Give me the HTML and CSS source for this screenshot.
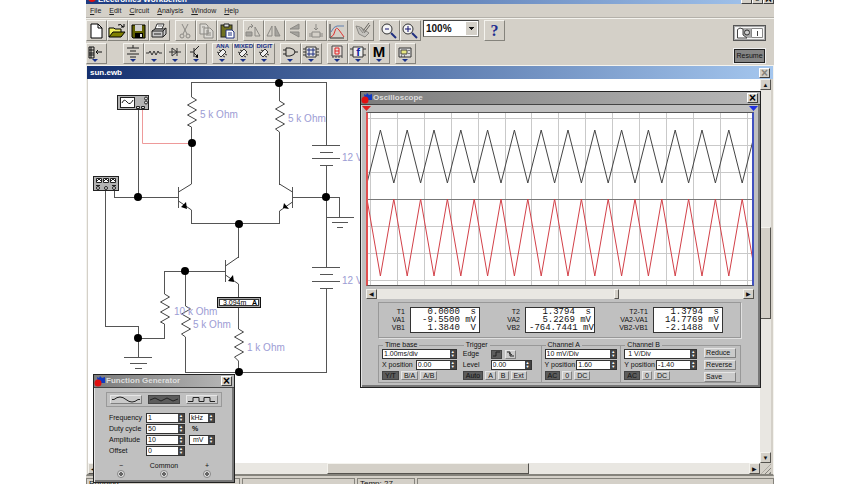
FILE: index.html
```html
<!DOCTYPE html>
<html lang="en">
<head>
  <meta charset="UTF-8" />
  <meta name="viewport" content="width=device-width, initial-scale=1.0"/>
  <title>Electronics Workbench</title>
  <link rel="stylesheet" href="styles.css">
</head>
<body>
  <div class="app">
    <header class="app-title">
      <svg class="bug" width="12" height="12" viewBox="0 0 12 12"><circle cx="6" cy="6" r="4" fill="#e01010"/></svg>
      <span class="app-name">Electronics Workbench</span>
      <span class="app-controls">
        <button class="win-btn" aria-label="Minimize">_</button>
        <button class="win-btn" aria-label="Restore">▫</button>
        <button class="win-btn" aria-label="Close">×</button>
      </span>
    </header>

    <nav class="menu">
      <a href="#"><u>F</u>ile</a>
      <a href="#"><u>E</u>dit</a>
      <a href="#"><u>C</u>ircuit</a>
      <a href="#"><u>A</u>nalysis</a>
      <a href="#"><u>W</u>indow</a>
      <a href="#"><u>H</u>elp</a>
    </nav>

    <div class="tools">
      <div class="tool-rows">
        <div class="toolbar">
          <div class="tool-group">
            <button class="tool" aria-label="New"><svg viewBox="0 0 18 18"><path d="M4 2h7l4 4v10H4z" fill="#fff" stroke="#000"/><path d="M11 2v4h4" fill="none" stroke="#000"/></svg></button>
            <button class="tool" aria-label="Open"><svg viewBox="0 0 18 18"><path d="M1 15V6h5l1 1h6v3" fill="#f0f060" stroke="#000"/><path d="M1 15l4-5h12l-4 5z" fill="#808000" stroke="#000"/><path d="M10 3q3-2 5 2M16 2v3h-3" fill="none" stroke="#000"/></svg></button>
            <button class="tool" aria-label="Save"><svg viewBox="0 0 18 18"><path d="M3 3h13v13H4l-1-1z" fill="#606000" stroke="#000"/><path d="M6 3h7v6H6z" fill="#d0d0d0"/><path d="M6 11h8v5H6z" fill="#000"/><path d="M11 12h2v3h-2z" fill="#ddd"/></svg></button>
            <button class="tool" aria-label="Print"><svg viewBox="0 0 18 18"><path d="M5 7l2-5h7l-2 5z" fill="#fff" stroke="#333"/><path d="M2 9l3-2h9l2-1v6l-3 3H2z" fill="#c8c8c8" stroke="#222"/><path d="M2 9h11v6M13 9l3-3M4 12h7" fill="none" stroke="#222"/><path d="M8 4h4" stroke="#777"/></svg></button>
          </div>
          <div class="tool-group">
            <button class="tool" aria-label="Cut"><svg viewBox="0 0 18 18"><path d="M6 2l5 10M12 2L7 12" fill="none" stroke="#8b8984"/><circle cx="6" cy="14" r="2" fill="none" stroke="#8b8984"/><circle cx="12" cy="14" r="2" fill="none" stroke="#8b8984"/></svg></button>
            <button class="tool" aria-label="Copy"><svg viewBox="0 0 18 18"><path d="M3 2h6l2 2v8H3zM7 6h6l3 3v7H7z" fill="#dcdad5" stroke="#8b8984"/><path d="M9 9h3M9 11h5M9 13h5M5 5h3" stroke="#8b8984"/></svg></button>
            <button class="tool" aria-label="Paste"><svg viewBox="0 0 18 18"><rect x="3" y="3" width="11" height="12" fill="#707020" stroke="#222"/><path d="M6 2h5v3H6z" fill="#ddd" stroke="#222"/><path d="M8 8h6l2 2v6H8z" fill="#fff" stroke="#203080"/><path d="M10 11h4M10 13h4" stroke="#203080"/></svg></button>
          </div>
          <div class="tool-group">
            <button class="tool" aria-label="Rotate"><svg viewBox="0 0 18 18"><path d="M2 14v-4h6v4z" fill="#a5a39e" stroke="#8b8984"/><path d="M11 14V5l5 9zM4 8q0-4 4-4M7 2l2 2-2 2" fill="none" stroke="#8b8984"/></svg></button>
            <button class="tool" aria-label="Flip horizontal"><svg viewBox="0 0 18 18"><path d="M2 14h5V4z" fill="none" stroke="#8b8984"/><path d="M10 14V4l5 10z" fill="#a5a39e" stroke="#8b8984"/></svg></button>
            <button class="tool" aria-label="Flip vertical"><svg viewBox="0 0 18 18"><path d="M13 2v5H4z" fill="#a5a39e" stroke="#8b8984"/><path d="M4 10h9v5z" fill="#a5a39e" stroke="#8b8984"/></svg></button>
            <button class="tool" aria-label="Create subcircuit"><svg viewBox="0 0 18 18"><path d="M9 2v6M7 6l2 2 2-2M5 10h8v5H5zM2 12h3M13 12h3M2 14h3M13 14h3" fill="none" stroke="#8b8984"/></svg></button>
            <button class="tool" aria-label="Display graphs"><svg viewBox="0 0 18 18"><path d="M2 2v14h14" fill="none" stroke="#333"/><path d="M3 10q3-6 6-6h7" fill="none" stroke="#6080b0"/><path d="M3 15q3-1 4-6t4-1 5 7" fill="none" stroke="#e03030"/></svg></button>
          </div>
          <div class="tool-group">
            <button class="tool" aria-label="Component properties"><svg viewBox="0 0 18 18"><path d="M2 4l3 8 6 3 4-4-9-6z" fill="#c5c3be" stroke="#8b8984"/><path d="M15 1l-6 8M16 3l-6 8" stroke="#66645f"/><path d="M5 6l4 5M7 5l4 6" stroke="#8b8984"/></svg></button>
          </div>
          <div class="tool-group">
            <button class="tool" aria-label="Zoom out"><svg viewBox="0 0 18 18"><circle cx="7" cy="7" r="5" fill="#f4f4f4" stroke="#333"/><path d="M5 7h4" stroke="#101070"/><path d="M11 11l5 5" stroke="#203080" stroke-width="2"/></svg></button>
            <button class="tool" aria-label="Zoom in"><svg viewBox="0 0 18 18"><circle cx="7" cy="7" r="5" fill="#f4f4f4" stroke="#333"/><path d="M4 7h6M7 4v6" stroke="#101070"/><path d="M11 11l5 5" stroke="#203080" stroke-width="2"/></svg></button>
          </div>
          <select class="zoom" aria-label="Zoom"><option>100%</option></select>
          <button class="tool help" aria-label="Help">?</button>
        </div>

        <div class="toolbar">
          <div class="tool-group favorites">
            <button class="tool" aria-label="Favorites"><svg viewBox="0 0 18 18"><path d="M2 2h5v11H2zM2 5h5M2 8h5M2 10h5M4 2v11M9 7h6M11 5L9 7l2 2" fill="none" stroke="#111"/><path class="drop" d="M5 14h6l-3 3z"/></svg></button>
          </div>
          <div class="tool-group">
            <button class="tool" aria-label="Sources"><svg viewBox="0 0 18 18"><path d="M9 0v3M3 3h12M6 6h6M3 9h12M6 12h6" stroke="#222"/><path class="drop" d="M6 14h6l-3 3z"/></svg></button>
            <button class="tool" aria-label="Basic"><svg viewBox="0 0 18 18"><path d="M1 8h3l1-2 2 4 2-4 2 4 2-4 1 2h3" fill="none" stroke="#333"/><path class="drop" d="M6 14h6l-3 3z"/></svg></button>
            <button class="tool" aria-label="Diodes"><svg viewBox="0 0 18 18"><path d="M3 7h12M6 3v8l5-4zM11 3v8" fill="none" stroke="#333"/><path class="drop" d="M6 14h6l-3 3z"/></svg></button>
            <button class="tool" aria-label="Transistors"><svg viewBox="0 0 18 18"><path d="M3 7h4M7 3v9M7 6l5-5M7 8l4 4" fill="none" stroke="#222"/><path d="M11 13V9l-3 3z"/><path class="drop" d="M6 14h6l-3 3z"/></svg></button>
          </div>
          <div class="tool-group">
            <button class="tool chip" aria-label="Analog ICs"><span>ANA</span><svg viewBox="0 0 18 18"><path d="M5 9l5-5 3 3-5 5zM4 7l2 1M6 5l2 1M12 9l2 1M10 11l2 1" fill="#eee" stroke="#333"/><path class="drop" d="M6 14h6l-3 3z"/></svg></button>
            <button class="tool chip" aria-label="Mixed ICs"><span>MIXED</span><svg viewBox="0 0 18 18"><path d="M5 9l5-5 3 3-5 5zM4 7l2 1M6 5l2 1M12 9l2 1M10 11l2 1" fill="#eee" stroke="#333"/><path class="drop" d="M6 14h6l-3 3z"/></svg></button>
            <button class="tool chip" aria-label="Digital ICs"><span>DIGIT</span><svg viewBox="0 0 18 18"><path d="M5 9l5-5 3 3-5 5zM4 7l2 1M6 5l2 1M12 9l2 1M10 11l2 1" fill="#eee" stroke="#333"/><path class="drop" d="M6 14h6l-3 3z"/></svg></button>
          </div>
          <div class="tool-group">
            <button class="tool" aria-label="Logic gates"><svg viewBox="0 0 18 18"><path d="M5 3h4q5 1 5 4t-5 4H5zM2 5h3M2 9h3M14 7h3" fill="none" stroke="#222"/><path class="drop" d="M6 14h6l-3 3z"/></svg></button>
            <button class="tool" aria-label="Digital"><svg viewBox="0 0 18 18"><path d="M4 2h10v10H4zM1 4h3M1 7h3M1 10h3M14 4h3M14 7h3M14 10h3" fill="#e8e8e8" stroke="#333"/><path d="M6 4h2v2H6zM10 4h2v2h-2zM6 8h2v2H6zM10 8h2v2h-2z" fill="none" stroke="#203080"/><path class="drop" d="M6 14h6l-3 3z"/></svg></button>
          </div>
          <div class="tool-group">
            <button class="tool" aria-label="Indicators"><svg viewBox="0 0 18 18"><path d="M4 1h10v10H4zM5 11v2M8 11v2M11 11v2M14 11v2" fill="#e8dcd8" stroke="#444"/><path d="M7 3h4v6H7zM7 6h4" fill="none" stroke="#e02020"/><path class="drop" d="M6 14h6l-3 3z"/></svg></button>
            <button class="tool" aria-label="Controls"><svg viewBox="0 0 18 18"><path d="M4 2h10v10H4zM1 4h3M1 10h3M14 4h3M14 10h3" fill="#eee" stroke="#333"/><text x="9" y="11" class="small-f">f</text><path class="drop" d="M6 14h6l-3 3z"/></svg></button>
            <button class="tool" aria-label="Miscellaneous"><svg viewBox="0 0 18 18"><text x="9" y="12" class="big-m">M</text><path class="drop" d="M6 14h6l-3 3z"/></svg></button>
          </div>
          <div class="tool-group">
            <button class="tool" aria-label="Instruments"><svg viewBox="0 0 18 18"><path d="M3 3h12v9H3z" fill="#ddd" stroke="#333"/><path d="M5 5h6v4H5z" fill="#e8e880" stroke="#444"/><path d="M13 5v1M13 8v1M5 11h1M8 11h1" stroke="#222"/><path class="drop" d="M6 14h6l-3 3z"/></svg></button>
          </div>
        </div>
      </div>

      <div class="power">
        <button class="power-switch" aria-label="Power switch"><svg width="29" height="12" viewBox="0 0 29 12"><path d="M0 0h29v12H0z" fill="#f4f4f4"/><path d="M6 1h10v10H6z" fill="#aaa"/><path d="M2.500 11V2.500L5 1l3 1v6l4 3z" fill="#fff" stroke="#444"/><path d="M16.500 1.500h11v9h-11z" fill="#fff" stroke="#888"/><circle cx="12" cy="5.500" r="2.500" fill="#ccc" stroke="#333"/><path d="M22.500 4v5" stroke="#444"/></svg></button>
        <button class="resume">Resume</button>
      </div>
    </div>

    <main class="child">
      <div class="child-title">
        <span>sun.ewb</span>
        <button class="win-btn dim" aria-label="Close circuit">×</button>
      </div>

      <div class="workspace">
        <div class="canvas">
          <svg class="circuit" width="672" height="383" viewBox="88 79 672 383">
            <!-- wires -->
            <g class="wire">
              <path d="M191.500 97V82.500H326.500V145.500M191.500 127V183.500M191.500 210V223.500H279.500V211M279.500 82.500V101M279.500 132V184.500"/>
              <path d="M114.500 191V197.500H178.500M138.500 110V197M105.500 191V326.500H138.500V357.500M138 338.500H164.500V324M164.500 294V271.500H225.500M185.500 271V306M185.500 337V372.500H326.500V288.500"/>
              <path d="M292.500 197.500H339.500V217.500M326.500 165.500V267.500M238.500 224V257.500M238.500 284V329M238.500 361V372"/>
              <path d="M312 145.500h28M320 152.500h13M312 158.500h28M320 165.500h13M312 267.500h28M320 274.500h13M312 281.500h28M320 288.500h13"/>
              <path d="M326 217.500h28M332 222.500h16M337 227.500h6M124 357.500h28M130 363.500h17M135 368.500h7"/>
              <path d="M178.500 187v21M292.500 187v21M225.500 260v22"/>
            </g>
            <path d="M142.500 110V143.500H191" fill="none" stroke="#ee9a9a"/>
            <!-- resistors and transistor legs -->
            <g class="part">
              <path d="M191.500 97l5 3-9 5 9 5-9 5 9 5-9 5 4 2M279.500 101l5 3-9 5 9 5-9 5 9 5-9 5 4 3"/>
              <path d="M164.500 294l5 3-9 5 9 5-9 5 9 5-9 5 4 2M185.500 306l5 3-9 5 9 5-9 5 9 5-9 5 4 3M238.500 329l5 3-9 5 9 5-9 5 9 5-9 5 4 4"/>
              <path d="M178.500 192l13-8M178.500 201l13 9M292.500 192l-13-8M292.500 202l-13 9M225.500 266l13-9M225.500 275l13 9"/>
            </g>
            <path d="M187 209l-6-2 5-5zM284 203l5 6-6-1zM234 282l-6-1 5-6z"/>
            <g>
              <circle cx="279" cy="83" r="4"/><circle cx="192" cy="143" r="4"/><circle cx="138" cy="197" r="4"/>
              <circle cx="326" cy="197" r="4"/><circle cx="239" cy="224" r="4"/><circle cx="185" cy="271" r="4"/>
              <circle cx="138" cy="338" r="4"/><circle cx="239" cy="372" r="4"/>
            </g>
            <g class="label">
              <text x="200" y="118">5 k Ohm</text>
              <text x="288" y="122">5 k Ohm</text>
              <text x="342" y="161">12 V</text>
              <text x="342" y="284">12 V</text>
              <text x="174" y="315">10 k Ohm</text>
              <text x="193" y="328">5 k Ohm</text>
              <text x="247" y="351">1 k Ohm</text>
            </g>
            <!-- oscilloscope and generator symbols -->
            <g stroke="#222">
              <rect x="117.500" y="95.500" width="31" height="14" fill="#b4b4b4"/>
              <rect x="120.500" y="97.500" width="14" height="10" fill="#fff"/>
              <path d="M122 103q2-5 5-1t6-2" fill="none"/>
              <circle cx="146" cy="98.500" r="1.500" fill="#ddd"/><circle cx="146" cy="102.500" r="1.500" fill="#ddd"/>
              <path d="M136.500 106.500h3v2h-3zM141.500 106.500h3v2h-3z" fill="#ddd"/>
              <rect x="93.500" y="176.500" width="25" height="14" fill="#b4b4b4"/>
              <path d="M96.500 178.500h5v4h-5zM103.500 178.500h5v4h-5zM110.500 178.500h5v4h-5z" fill="#fff"/>
              <path d="M97 181l2-2 2 2M104 181l2-2 2 2M111 181l2-2 2 2" fill="none"/>
              <path d="M96 185.500h4M112 185.500h4" fill="none"/>
              <circle cx="98" cy="188" r="1.500" fill="#ddd"/><circle cx="106" cy="188" r="1.500" fill="#ddd"/><circle cx="114" cy="188" r="1.500" fill="#ddd"/>
            </g>
            <!-- ammeter -->
            <rect x="217.500" y="297.500" width="43" height="10" fill="#aaa" stroke="#111"/>
            <rect x="219.500" y="299.500" width="39" height="6" fill="#fff" stroke="#333"/>
            <text x="223" y="305" class="meter">3.094m</text>
            <text x="252" y="305" class="meter unit">A</text>
          </svg>
        </div>

        <div class="scroll vertical">
          <button class="arrow" aria-label="Scroll up">▲</button>
          <span class="thumb"></span>
          <button class="arrow" aria-label="Scroll down">▼</button>
        </div>
        <div class="scroll horizontal">
          <button class="arrow" aria-label="Scroll left">◀</button>
          <span class="thumb"></span>
          <button class="arrow" aria-label="Scroll right">▶</button>
        </div>
        <div class="grip"></div>

        <section class="dialog scope">
          <div class="dialog-title">
            <svg width="12" height="11" viewBox="0 0 12 11"><path d="M3 1l2 1 1-2 2 2 3-1v6H4z" fill="#1038c0"/><circle cx="4" cy="7" r="3.500" fill="#e01010"/></svg>
            <span>Oscilloscope</span>
            <button class="win-btn" aria-label="Close oscilloscope">×</button>
          </div>
          <div class="scope-body">
            <div class="cursors"><span class="cursor-one"></span><span class="cursor-two"></span></div>
            <div class="screen">
              <svg width="386" height="172" viewBox="0 0 386 172">
                <path class="grid" d="M2.500 0v172M29.500 0v172M56.500 0v172M83.500 0v172M110.500 0v172M137.500 0v172M163.500 0v172M190.500 0v172M217.500 0v172M244.500 0v172M271.500 0v172M298.500 0v172M325.500 0v172M352.500 0v172M379.500 0v172"/>
                <path class="grid" d="M0 5.500h386M0 32.500h386M0 59.500h386M0 113.500h386M0 140.500h386M0 167.500h386"/>
                <path class="axis" d="M0 86.500h386"/>
                <path class="trace-a" d="M-1 70l13.400-53 13.400 53 13.400-53 13.400 53 13.400-53 13.400 53 13.400-53 13.400 53 13.400-53 13.400 53 13.400-53 13.400 53 13.400-53 13.400 53 13.400-53 13.400 53 13.400-53 13.400 53 13.400-53 13.400 53 13.400-53 13.400 53 13.400-53 13.400 53 13.400-53 13.400 53 13.400-53 13.400 53 13.400-53"/>
                <path class="trace-b" d="M-1 86l13.400 77 13.400-77 13.400 77 13.400-77 13.400 77 13.400-77 13.400 77 13.400-77 13.400 77 13.400-77 13.400 77 13.400-77 13.400 77 13.400-77 13.400 77 13.400-77 13.400 77 13.400-77 13.400 77 13.400-77 13.400 77 13.400-77 13.400 77 13.400-77 13.400 77 13.400-77 13.400 77 13.400-77 13.400 77"/>
              </svg>
            </div>
            <div class="scroll scope-scroll">
              <button class="arrow" aria-label="Earlier">◀</button>
              <span class="thumb"></span>
              <button class="arrow" aria-label="Later">▶</button>
            </div>

            <div class="readouts">
              <div class="names">T1<br>VA1<br>VB1</div>
              <pre class="values">0.0000  s
-9.5500 mV
1.3840  V</pre>
              <div class="names">T2<br>VA2<br>VB2</div>
              <pre class="values">1.3794  s
5.2269 mV
-764.7441 mV</pre>
              <div class="names">T2-T1<br>VA2-VA1<br>VB2-VB1</div>
              <pre class="values">1.3794  s
14.7769 mV
-2.1488  V</pre>
            </div>

            <div class="settings">
              <fieldset>
                <legend>Time base</legend>
                <div class="spin"><input type="text" value="1.00ms/div" aria-label="Time base"><span class="steps"><button aria-label="Up">▲</button><button aria-label="Down">▼</button></span></div>
                <div class="line"><label for="xpos">X position</label><div class="spin short"><input id="xpos" type="text" value="0.00"><span class="steps"><button aria-label="Up">▲</button><button aria-label="Down">▼</button></span></div></div>
                <div class="modes"><button class="on">Y/T</button><button>B/A</button><button>A/B</button></div>
              </fieldset>
              <fieldset class="trigger">
                <legend>Trigger</legend>
                <div class="line edge"><span>Edge</span><button class="on" aria-label="Rising edge"><svg width="9" height="6" viewBox="0 0 9 6"><path d="M1 5h3V1h4" fill="none" stroke="#222"/></svg></button><button aria-label="Falling edge"><svg width="9" height="6" viewBox="0 0 9 6"><path d="M1 1h3v4h4M3 2l3 2" fill="none" stroke="#222"/></svg></button></div>
                <div class="line"><label for="level">Level</label><div class="spin short"><input id="level" type="text" value="0.00"><span class="steps"><button aria-label="Up">▲</button><button aria-label="Down">▼</button></span></div></div>
                <div class="modes"><button class="on">Auto</button><button>A</button><button>B</button><button>Ext</button></div>
              </fieldset>
              <fieldset>
                <legend>Channel A</legend>
                <div class="spin"><input type="text" value="10 mV/Div" aria-label="Channel A scale"><span class="steps"><button aria-label="Up">▲</button><button aria-label="Down">▼</button></span></div>
                <div class="line"><label for="ya">Y position</label><div class="spin short"><input id="ya" type="text" value="1.60"><span class="steps"><button aria-label="Up">▲</button><button aria-label="Down">▼</button></span></div></div>
                <div class="modes"><button class="on">AC</button><button>0</button><button>DC</button></div>
              </fieldset>
              <fieldset>
                <legend>Channel B</legend>
                <div class="spin"><input type="text" value=" 1 V/Div" aria-label="Channel B scale"><span class="steps"><button aria-label="Up">▲</button><button aria-label="Down">▼</button></span></div>
                <div class="line"><label for="yb">Y position</label><div class="spin short"><input id="yb" type="text" value="-1.40"><span class="steps"><button aria-label="Up">▲</button><button aria-label="Down">▼</button></span></div></div>
                <div class="modes"><button class="on">AC</button><button>0</button><button>DC</button></div>
              </fieldset>
              <div class="commands"><button>Reduce</button><button>Reverse</button><button>Save</button></div>
            </div>
          </div>
        </section>

        <section class="dialog generator">
          <div class="dialog-title">
            <svg width="12" height="11" viewBox="0 0 12 11"><path d="M3 1l2 1 1-2 2 2 3-1v6H4z" fill="#1038c0"/><circle cx="4" cy="7" r="3.500" fill="#e01010"/></svg>
            <span>Function Generator</span>
            <button class="win-btn" aria-label="Close function generator">×</button>
          </div>
          <div class="generator-body">
            <div class="waves">
              <button aria-label="Sine"><svg width="30" height="7" viewBox="0 0 30 7"><path d="M1 3.500h2q6-5 12 0t12 0h2" fill="none" stroke="#222"/></svg></button>
              <button class="on" aria-label="Triangle"><svg width="30" height="7" viewBox="0 0 30 7"><path d="M1 4l5-2 6 3 6-3 6 3 5-2" fill="none" stroke="#222"/></svg></button>
              <button aria-label="Square"><svg width="30" height="7" viewBox="0 0 30 7"><path d="M1 5.500h5v-4h6v4h5v-4h6v4h5" fill="none" stroke="#222"/></svg></button>
            </div>
            <div class="params">
              <label for="freq">Frequency</label>
              <div class="spin"><input id="freq" type="text" value="1"><span class="steps"><button aria-label="Up">▲</button><button aria-label="Down">▼</button></span></div>
              <div class="spin"><input type="text" value="kHz" aria-label="Frequency unit"><span class="steps"><button aria-label="Up">▲</button><button aria-label="Down">▼</button></span></div>
              <label for="duty">Duty cycle</label>
              <div class="spin"><input id="duty" type="text" value="50"><span class="steps"><button aria-label="Up">▲</button><button aria-label="Down">▼</button></span></div>
              <b>%</b>
              <label for="amp">Amplitude</label>
              <div class="spin"><input id="amp" type="text" value="10"><span class="steps"><button aria-label="Up">▲</button><button aria-label="Down">▼</button></span></div>
              <div class="spin"><input type="text" value=" mV" aria-label="Amplitude unit"><span class="steps"><button aria-label="Up">▲</button><button aria-label="Down">▼</button></span></div>
              <label for="offset">Offset</label>
              <div class="spin"><input id="offset" type="text" value="0"><span class="steps"><button aria-label="Up">▲</button><button aria-label="Down">▼</button></span></div>
            </div>
            <div class="terminals">
              <label>−<input type="radio" name="terminal"></label>
              <label>Common<input type="radio" name="terminal"></label>
              <label>+<input type="radio" name="terminal"></label>
            </div>
          </div>
        </section>
      </div>
    </main>

    <footer class="status">
      <span>Running</span>
      <span></span>
      <span>Temp: 27</span>
      <span></span>
    </footer>
  </div>
</body>
</html>
```

FILE: styles.css
```css
:root {
  --face: #d4d0c8;
  --light: #f4f3ee;
  --shade: #85837c;
  --panel: #c0c0c0;
  --navy: #14306f;
  --sky: #a4c6ee;
}

* {
  box-sizing: border-box;
  margin: 0;
  padding: 0;
}

body {
  background: #fff;
  color: #111;
  font: 7px/8px "Liberation Sans", Arial, sans-serif;
}

button,
input,
select {
  font: inherit;
  color: inherit;
  border: none;
  border-radius: 0;
  appearance: none;
}

.app {
  width: 80%;
  height: 100vh;
  margin: 0 auto;
  display: flex;
  flex-direction: column;
  background: var(--face);
  overflow: hidden;
}

/* title bar, mostly scrolled off the top */
.app-title {
  display: flex;
  align-items: flex-end;
  height: 4px;
  overflow: hidden;
  background: linear-gradient(90deg, #1c3a80, var(--sky));
  color: #fff;
  font-size: 8px;
  font-weight: bold;
}

.app-title > * {
  flex-shrink: 0;
}

.app-controls {
  display: flex;
  margin-left: auto;
}

.win-btn {
  width: 11px;
  height: 10px;
  background: var(--face);
  color: #000;
  border: 1px solid;
  border-color: #fff #404040 #404040 #fff;
  font-size: 12px;
  line-height: 8px;
}

.win-btn.dim {
  color: var(--shade);
}

.menu {
  display: flex;
  gap: 8px;
  height: 14px;
  padding: 3px 4px;
  border-bottom: 1px solid #b4b1aa;
}

.menu a {
  color: #222;
  text-decoration: none;
}

/* toolbars */
.tools {
  display: flex;
  justify-content: space-between;
  border-top: 1px solid var(--light);
}

.toolbar {
  display: flex;
  gap: 5px;
  height: 23px;
  padding-top: 1px;
}

.tool-group {
  display: flex;
}

.tool {
  width: 21px;
  height: 21px;
  background: var(--face);
  border: 1px solid;
  border-color: var(--light) var(--shade) var(--shade) var(--light);
}

.tool svg {
  display: block;
  width: 18px;
  height: 18px;
}

.drop {
  fill: #18308a;
}

.big-m {
  font: bold 15px "Liberation Sans", Arial, sans-serif;
  text-anchor: middle;
}

.small-f {
  fill: #1020a0;
  font: bold 11px "Liberation Sans", Arial, sans-serif;
  text-anchor: middle;
}

.help {
  color: #1c2c90;
  font: bold 16px "Liberation Serif", serif;
}

.favorites {
  margin-right: 11px;
}

.chip {
  position: relative;
}

.chip span {
  position: absolute;
  top: 0;
  left: 0;
  right: 0;
  color: #18308a;
  font-size: 6px;
  font-weight: bold;
  line-height: 5px;
  text-align: center;
}

.zoom {
  width: 56px;
  height: 17px;
  margin-left: -3px;
  padding-left: 2px;
  background: linear-gradient(#111, #111) right 4px top 6px / 5px 1px no-repeat,
    linear-gradient(#111, #111) right 5px top 7px / 3px 1px no-repeat,
    linear-gradient(#111, #111) right 6px top 8px / 1px 1px no-repeat,
    linear-gradient(var(--face), var(--face)) right 1px top 1px / 11px 13px no-repeat,
    #fff;
  border: 1px solid;
  border-color: #444 var(--shade) var(--shade) #444;
  font-size: 10px;
  font-weight: bold;
  line-height: 14px;
}

.power {
  display: flex;
  flex-direction: column;
  gap: 7px;
  padding: 6px 8px 0 0;
}

.power-switch,
.resume {
  width: 33px;
  height: 16px;
  background: #a8a8a8;
  border: 1px solid #555;
}

.power-switch svg {
  display: block;
  margin: auto;
}

.resume {
  border: 2px solid #222;
  outline: 1px solid #eee;
  outline-offset: -1px;
  background: #858585;
}

/* circuit window */
.child {
  flex: 1;
  display: flex;
  flex-direction: column;
  border: 1px solid var(--light);
  border-bottom: 2px solid var(--shade);
}

.child-title {
  display: flex;
  align-items: center;
  justify-content: space-between;
  height: 13px;
  padding: 0 3px;
  background: linear-gradient(90deg, var(--navy), var(--sky));
  color: #fff;
  font-size: 8px;
  font-weight: bold;
}

.workspace {
  position: relative;
  flex: 1;
  display: grid;
  grid-template-columns: 1fr 11px;
  grid-template-rows: 1fr 11px;
  padding: 0 2px 0 1px;
}

.canvas {
  background: #fff;
  overflow: hidden;
}

.circuit {
  display: block;
}

.wire {
  fill: none;
  stroke: #555;
  shape-rendering: crispEdges;
}

.part {
  fill: none;
  stroke: #444;
}

.label {
  fill: #9c9cd4;
  font-size: 10px;
}

.meter {
  font-size: 7px;
}

.unit {
  font-weight: bold;
}

.scroll {
  display: flex;
  background: #e9e7e2;
}

.vertical {
  flex-direction: column;
}

.arrow {
  flex: none;
  width: 11px;
  height: 11px;
  background: var(--face);
  border: 1px solid;
  border-color: var(--light) #55534e #55534e var(--light);
  font-size: 6px;
  line-height: 8px;
}

.thumb {
  background: var(--face);
  border: 1px solid;
  border-color: var(--light) #55534e #55534e var(--light);
}

.vertical .thumb {
  height: 24%;
  margin: 137px 0 auto;
}

.horizontal .thumb {
  width: 30%;
  margin: 0 auto 0 34%;
}

.grip {
  background: repeating-linear-gradient(135deg, var(--face) 0 2px, var(--shade) 2px 3px);
  clip-path: polygon(100% 10%, 100% 100%, 10% 100%);
}

/* floating instruments */
.dialog {
  position: absolute;
  background: var(--panel);
  border: 1px solid #222;
  box-shadow: inset 1px 1px #e4e4e4, inset -2px -2px #777;
}

.scope {
  top: 12px;
  left: 273px;
  width: 401px;
}

.generator {
  top: 295px;
  left: 6px;
  width: 142px;
}

.dialog-title {
  display: flex;
  align-items: center;
  height: 13px;
  padding-right: 2px;
  background: linear-gradient(90deg, #7c7c7c, #b8b8b8);
  border-bottom: 1px solid #444;
  color: #dedede;
  font-size: 8px;
  font-weight: bold;
}

.dialog-title .win-btn {
  margin-left: auto;
}

.scope-body {
  padding: 0 6px 4px 5px;
}

.cursors {
  display: flex;
  justify-content: space-between;
  height: 7px;
  margin: 0 -4px;
  padding-top: 1px;
}

.cursor-one,
.cursor-two {
  width: 9px;
  height: 5px;
  background: #e02020;
  clip-path: polygon(0 0, 100% 0, 50% 100%);
}

.cursor-two {
  background: #2030e0;
}

.screen {
  background: #fff;
  border: 1px solid #555;
  border-left: 2px solid #e05050;
  border-right: 2px solid #4050c0;
  overflow: hidden;
}

.screen svg {
  display: block;
}

.grid {
  stroke: #c9c9c9;
}

.axis {
  stroke: #777;
}

.trace-a,
.trace-b {
  fill: none;
  stroke: #444;
}

.trace-b {
  stroke: #d24048;
}

.scope-scroll {
  margin-top: 3px;
}

.scope-scroll .thumb {
  width: 5px;
  margin: 0 auto 0 61%;
}

.scope-scroll .arrow {
  height: 10px;
}

.readouts {
  display: grid;
  grid-template-columns: 26px 70px 35px 70px 48px 70px;
  column-gap: 5px;
  margin: 3px 13px 0 12px;
  padding: 4px 0;
  border: 1px solid #989898;
  box-shadow: 1px 1px #e0e0e0;
}

.names {
  padding-top: 1px;
  text-align: right;
}

.values {
  padding: 0 3px;
  background: #fff;
  border: 1px solid #333;
  font: 9px/8px "Liberation Mono", monospace;
  text-align: right;
}

.settings {
  display: grid;
  grid-template-columns: 82fr 81fr 80fr 80fr 41fr;
  margin: 3px 13px 0 12px;
}

fieldset {
  min-width: 0;
  padding: 0 3px 1px;
  border: 1px solid #989898;
  border-width: 1px 0 1px 1px;
}

.trigger {
  border-left: none;
}

legend {
  margin-left: 1px;
  padding: 0 2px;
}

.spin {
  display: flex;
  height: 10px;
  background: #fff;
  border: 1px solid #333;
}

.spin input {
  flex: 1;
  width: 0;
  min-width: 0;
  padding-left: 1px;
  background: transparent;
}

.steps {
  display: flex;
  flex-direction: column;
  width: 6px;
}

.steps button {
  height: 4px;
  background: #444;
  color: #fff;
  font-size: 4px;
  line-height: 4px;
}

.line {
  display: flex;
  align-items: center;
  justify-content: space-between;
  height: 11px;
}

.short {
  width: 41px;
}

.edge {
  justify-content: flex-start;
  gap: 3px;
  height: 10px;
}

.edge span {
  width: 25px;
}

.trigger .short {
  margin-right: 6px;
}

.modes {
  display: flex;
  gap: 2px;
  margin-top: 1px;
}

.modes button,
.edge button,
.commands button,
.waves button {
  background: #cacaca;
  border: 1px solid;
  border-color: #e6e6e6 #808080 #808080 #e6e6e6;
}

.modes button,
.edge button {
  height: 9px;
  padding: 0 2px;
  line-height: 7px;
}

.edge button {
  padding: 0;
}

.edge svg {
  display: block;
}

.modes .on,
.edge .on,
.waves .on {
  background: #5c5c5c;
  border-color: #444;
}

.commands {
  display: flex;
  flex-direction: column;
  gap: 2px;
  margin-top: 4px;
  padding: 2px 4px 0;
  border: 1px solid #989898;
  border-left: none;
}

.commands button {
  height: 10px;
  line-height: 8px;
  padding-left: 1px;
  text-align: left;
}

.generator-body {
  padding: 4px 12px 4px;
}

.waves {
  display: flex;
  justify-content: space-between;
  padding: 2px 3px;
  border: 1px solid #999;
}

.waves button {
  height: 9px;
}

.waves svg {
  display: block;
}

.params {
  display: grid;
  grid-template-columns: 34px 39px 27px;
  gap: 1px 3px;
  padding: 6px 0 0 3px;
  align-items: center;
}

.params .spin:nth-child(3n) {
  margin-left: 1px;
}

.params b {
  padding-left: 4px;
}

.terminals {
  display: flex;
  justify-content: space-between;
  margin-top: 6px;
}

.terminals label {
  display: flex;
  flex-direction: column;
  align-items: center;
  width: 30px;
}

.terminals input {
  width: 8px;
  height: 8px;
  background: radial-gradient(#666 0 2px, #ddd 2px);
  border: 1px solid #888;
  border-radius: 50%;
}

/* status bar, cut by the bottom edge */
.status {
  display: grid;
  grid-template-columns: 154fr 113fr 58fr 357fr;
  gap: 2px;
  height: 8px;
  padding-top: 2px;
}

.status span {
  height: 12px;
  padding: 1px 2px;
  border: 1px solid var(--shade);
  font-size: 8px;
}
```
